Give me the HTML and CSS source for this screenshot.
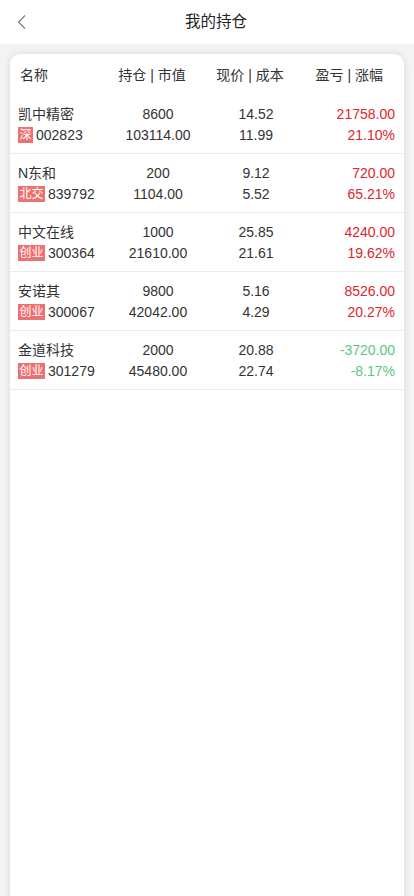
FILE: index.html
```html
<!DOCTYPE html>
<html lang="zh-CN">
<head>
<meta charset="utf-8">
<meta name="viewport" content="width=device-width, initial-scale=1">
<title>我的持仓</title>
<link rel="stylesheet" href="styles.css">
</head>
<body>
<header class="topbar">
  <span class="back">
    <svg width="12" height="16" viewBox="0 0 12 16"><polyline points="8,1.5 1.5,8 8,14.5" fill="none" stroke="#777" stroke-width="1.1"/></svg>
  </span>
  <h1 class="title">我的持仓</h1>
</header>
<main class="card">
  <div class="thead">
    <span class="c1">名称</span>
    <span class="c2">持仓 | 市值</span>
    <span class="c3">现价 | 成本</span>
    <span class="c4">盈亏 | 涨幅</span>
  </div>
  <div class="row">
    <div class="c1"><div class="l1">凯中精密</div><div class="l2"><span class="tag">深</span>002823</div></div>
    <div class="c2"><div class="l1">8600</div><div class="l2">103114.00</div></div>
    <div class="c3"><div class="l1">14.52</div><div class="l2">11.99</div></div>
    <div class="c4 up"><div class="l1">21758.00</div><div class="l2">21.10%</div></div>
  </div>
  <div class="row">
    <div class="c1"><div class="l1">N东和</div><div class="l2"><span class="tag">北交</span>839792</div></div>
    <div class="c2"><div class="l1">200</div><div class="l2">1104.00</div></div>
    <div class="c3"><div class="l1">9.12</div><div class="l2">5.52</div></div>
    <div class="c4 up"><div class="l1">720.00</div><div class="l2">65.21%</div></div>
  </div>
  <div class="row">
    <div class="c1"><div class="l1">中文在线</div><div class="l2"><span class="tag">创业</span>300364</div></div>
    <div class="c2"><div class="l1">1000</div><div class="l2">21610.00</div></div>
    <div class="c3"><div class="l1">25.85</div><div class="l2">21.61</div></div>
    <div class="c4 up"><div class="l1">4240.00</div><div class="l2">19.62%</div></div>
  </div>
  <div class="row">
    <div class="c1"><div class="l1">安诺其</div><div class="l2"><span class="tag">创业</span>300067</div></div>
    <div class="c2"><div class="l1">9800</div><div class="l2">42042.00</div></div>
    <div class="c3"><div class="l1">5.16</div><div class="l2">4.29</div></div>
    <div class="c4 up"><div class="l1">8526.00</div><div class="l2">20.27%</div></div>
  </div>
  <div class="row">
    <div class="c1"><div class="l1">金道科技</div><div class="l2"><span class="tag">创业</span>301279</div></div>
    <div class="c2"><div class="l1">2000</div><div class="l2">45480.00</div></div>
    <div class="c3"><div class="l1">20.88</div><div class="l2">22.74</div></div>
    <div class="c4 down"><div class="l1">-3720.00</div><div class="l2">-8.17%</div></div>
  </div>
</main>
</body>
</html>
```
FILE: styles.css
```css
* { box-sizing: border-box; margin: 0; padding: 0; }
html, body { background: #f3f3f3; }
body {
  font-family: "Liberation Sans", Arial, "Noto Sans CJK SC", sans-serif;
  color: #333;
  font-size: 14px;
}
.topbar {
  height: 44px;
  background: #fff;
  display: flex;
  align-items: center;
  justify-content: center;
  position: relative;
}
.back {
  position: absolute;
  left: 17px;
  top: 14px;
  width: 12px;
  height: 16px;
  display: flex;
}
.title {
  font-size: 15.5px;
  font-weight: normal;
  color: #222;
  line-height: 44px;
  padding-left: 18px;
}
.card {
  margin: 10px 10px 0;
  background: #fff;
  border-radius: 10px 10px 0 0;
  box-shadow: 0 0 7px rgba(0, 0, 0, 0.12);
  min-height: 880px;
}
.thead {
  display: grid;
  grid-template-columns: 83px 98px 98px 1fr;
  height: 41px;
  line-height: 42px;
  padding: 0 21px 0 10px;
  color: #333;
}
.row {
  display: grid;
  grid-template-columns: 91px 98px 98px 1fr;
  padding: 9px 9px 7px 8px;
  border-bottom: 1px solid #ececec;
}
.c2, .c3 { text-align: center; }
.c4 { text-align: right; }
.l1 { line-height: 20px; height: 20px; white-space: nowrap; }
.l2 { line-height: 22px; height: 22px; white-space: nowrap; display: flex; align-items: center; }
.c2 .l2, .c3 .l2 { justify-content: center; }
.c4 .l2 { justify-content: flex-end; }
.tag {
  display: inline-block;
  background: #ef7070;
  color: #fff;
  font-size: 12px;
  line-height: 16px;
  height: 16px;
  padding: 0 1.5px;
  margin-right: 3px;
}
.up { color: #e0242c; }
.down { color: #5cc67e; }
```
